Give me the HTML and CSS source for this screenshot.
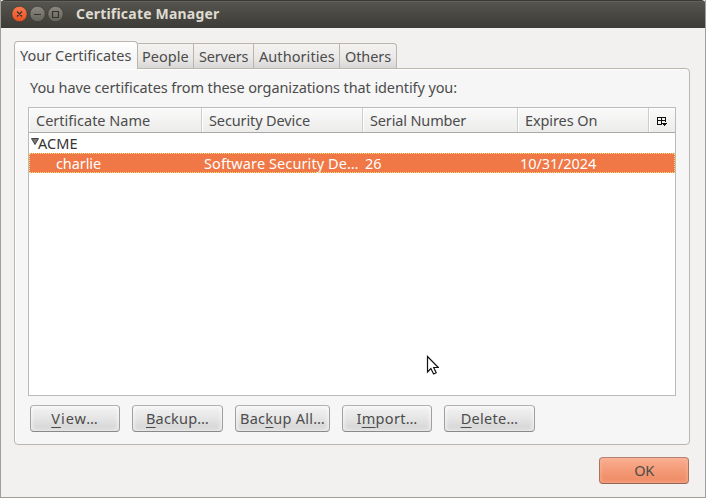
FILE: index.html
```html
<!DOCTYPE html>
<html lang="en">
<head>
<meta charset="utf-8">
<title>Certificate Manager</title>
<link rel="stylesheet" href="styles.css">
</head>
<body>
<div class="window">
  <header class="titlebar">
    <svg class="controls" width="54" height="18" viewBox="0 0 54 18">
      <defs>
        <linearGradient id="close" x1="0" y1="0" x2="0" y2="1"><stop offset="0" stop-color="#f9794e"/><stop offset="1" stop-color="#e8501f"/></linearGradient>
        <linearGradient id="grey" x1="0" y1="0" x2="0" y2="1"><stop offset="0" stop-color="#8b8980"/><stop offset="1" stop-color="#64635b"/></linearGradient>
      </defs>
      <circle cx="8.5" cy="9" r="7.7" fill="url(#close)" stroke="#3a3934" stroke-width=".7"/>
      <circle cx="26.5" cy="9" r="7.7" fill="url(#grey)" stroke="#3a3934" stroke-width=".7"/>
      <circle cx="44.5" cy="9" r="7.7" fill="url(#grey)" stroke="#3a3934" stroke-width=".7"/>
      <path d="M6 6.500l5 5M11 6.500l-5 5M23 9.500h7M41.500 6.500h6v6h-6z" fill="none" stroke="#34332e" stroke-width="1.2"/>
    </svg>
    <h1 class="title">Certificate Manager</h1>
  </header>
  <main class="content">
    <nav class="tabs">
      <span class="tab active">Your Certificates</span>
      <span class="tab people">People</span>
      <span class="tab servers">Servers</span>
      <span class="tab authorities">Authorities</span>
      <span class="tab others">Others</span>
    </nav>
    <section class="panel">
      <p class="intro"><span>You have certificates from these organizations that identify you:</span></p>
      <div class="tree">
        <div class="row head">
          <span class="c-name">Certificate Name</span><span class="c-device">Security Device</span><span class="c-serial">Serial Number</span><span class="c-expires">Expires On</span>
          <span class="picker"><svg width="11" height="10" viewBox="0 0 11 10" shape-rendering="crispEdges"><path d="M0 0h9v1H0zM0 1h1v7H0zM8 1h1v4H8zM1 3h7v1H1zM4 1h1v7H4zM1 7h3v1H1zM5 6h5v1H9v1H8v1H7V8H6V7H5z" fill="#111"/></svg></span>
        </div>
        <div class="row group"><svg width="8" height="7" viewBox="0 0 8 7"><path d="M.5.5h7l-3.500 6z" fill="#777" stroke="#444"/></svg><span>ACME</span></div>
        <div class="row selected"><span>charlie</span><span class="device">Software Security De…</span><span>26</span><span class="date">10/31/2024</span></div>
      </div>
      <div class="actions">
        <button class="b-view"><u>V</u>iew…</button>
        <button class="b-backup"><u>B</u>ackup…</button>
        <button class="b-all">Bac<u>k</u>up All…</button>
        <button class="b-import">I<u>m</u>port…</button>
        <button class="b-delete"><u>D</u>elete…</button>
      </div>
    </section>
    <footer class="footer"><button class="ok">OK</button></footer>
  </main>
  <svg class="cursor" width="14" height="21" viewBox="0 0 14 21"><path d="M2.500 1.500v15.500l3.400-3.500 2.700 5.500 2.600-1.300-2.500-5.200h4.700z" fill="#fff" stroke="#111" stroke-width="1.200"/></svg>
</div>
</body>
</html>
```

FILE: styles.css
```css
* { box-sizing: border-box; }
body {
  margin: 0;
  background: #3c3b37;
  font: 14.5px/20px "Noto Sans", sans-serif;
  color: #4c4c4c;
}
.window {
  position: relative;
  width: 706px;
  height: 498px;
  border: 1px solid #a19e9a;
  border-top: 0;
  background: #f2f1f0;
  overflow: hidden;
}
.titlebar {
  display: flex;
  align-items: center;
  height: 28px;
  margin: 0 -1px;
  padding-left: 11px;
  border-top: 1px solid #3b3a36;
  border-radius: 5px 5px 0 0;
  background: linear-gradient(#56554e, #3c3b37);
  box-shadow: inset 0 1px #62615a;
}
.title {
  margin: -2px 0 0 11px;
  font-size: 14px;
  line-height: 20px;
  font-weight: 700;
  letter-spacing: 0.2px;
  color: #dfdbd2;
}
.controls { margin-top: -1px; }
.content { padding: 13px 15px 0 13px; }
.tabs {
  position: relative;
  z-index: 1;
  display: flex;
  align-items: flex-end;
  height: 28px;
  margin-bottom: -1px;
}
.tab {
  height: 26px;
  padding: 2px 0 0 5px;
  border: 1px solid #bbb5af;
  border-left-width: 0;
  background: linear-gradient(#f4f3f2, #e9e8e7 60%, #d9d7d5);
  white-space: nowrap;
}
.tab.active {
  width: 124px;
  height: 28px;
  padding-top: 3px;
  border-left-width: 1px;
  border-bottom: 0;
  border-radius: 4px 4px 0 0;
  background: linear-gradient(#fff, #f6f6f6 50%);
  letter-spacing: 0;
}
.tab.people { width: 56px; padding-left: 4px; letter-spacing: 0; }
.servers { width: 60px; letter-spacing: -0.2px; }
.authorities { width: 86px; letter-spacing: 0.07px; }
.others { width: 57px; border-radius: 0 4px 0 0; letter-spacing: -0.1px; }
.panel {
  height: 377px;
  padding: 8px 13px 0;
  border: 1px solid #bbb5af;
  border-radius: 0 4px 4px 4px;
  background: #f6f6f6;
  box-shadow: inset 1px 1px #fff;
}
.intro {
  margin: 0 0 10px 2px;
  letter-spacing: -0.1px;
  white-space: nowrap;
}
.tree {
  height: 289px;
  border: 1px solid #bdbbb8;
  background: #fff;
}
.row {
  display: grid;
  grid-template-columns: 173px 161px 155px 131px 26px;
  height: 20px;
  white-space: nowrap;
}
.head {
  height: 25px;
  border-bottom: 1px solid #aaa7a4;
  background: linear-gradient(#fafafa, #ececeb);
}
.head > span {
  padding: 2px 0 0 7px;
  border-right: 1px solid #cfcdcb;
  box-shadow: inset 1px 1px #fff;
}
.head .picker { padding: 9px 0 0 8px; border: 0; line-height: 0; }
.c-name { letter-spacing: 0; }
.c-device { letter-spacing: -0.12px; }
.c-serial { letter-spacing: -0.15px; }
.c-expires { letter-spacing: -0.1px; }
.group {
  display: flex;
  align-items: center;
  padding: 0 0 0 2px;
  color: #333;
  letter-spacing: 0.1px;
}
.group svg { margin: -3px -1px 0 0; }
.selected {
  height: 20px;
  outline: 1px dotted #f6df83;
  outline-offset: -1px;
  background: #f07746;
  color: #fff;
  line-height: 21px;
}
.selected > span { padding-left: 2px; letter-spacing: -0.1px; }
.selected > .device { letter-spacing: 0.1px; }
.selected > span:first-child { padding-left: 27px; }
.actions {
  display: flex;
  padding: 9px 0 0 2px;
}
button {
  height: 27px;
  padding: 0 0 1px;
  border: 1px solid #9b9997;
  border-color: #b3b1af #a19f9d #8b8987;
  border-radius: 4px;
  background: linear-gradient(#f3f3f3, #e5e5e5 50%, #d2d2d2);
  box-shadow: inset 0 0 5px #fff;
  font: inherit;
  line-height: 24px;
  color: #4c4c4c;
  white-space: nowrap;
}
u { text-underline-offset: 3px; text-decoration-thickness: 1px; }
.b-view { width: 90px; margin-right: 12px; letter-spacing: 1px; }
.b-backup { width: 91px; margin-right: 12px; letter-spacing: 0.2px; }
.b-all { width: 95px; margin-right: 12px; letter-spacing: 0.25px; }
.b-import { width: 90px; margin-right: 12px; letter-spacing: 0.3px; }
.b-delete { width: 91px; letter-spacing: 0.3px; }
.footer {
  display: flex;
  justify-content: flex-end;
  padding: 12px 1px 0 0;
}
.ok {
  width: 90px;
  border-color: #b78270 #a57563 #936554;
  background: linear-gradient(#f9ae90, #f49a77 50%, #ee8963);
  box-shadow: inset 0 0 4px #fbb99e;
  letter-spacing: -0.4px;
}
.cursor { position: absolute; left: 424px; top: 355px; }
```
